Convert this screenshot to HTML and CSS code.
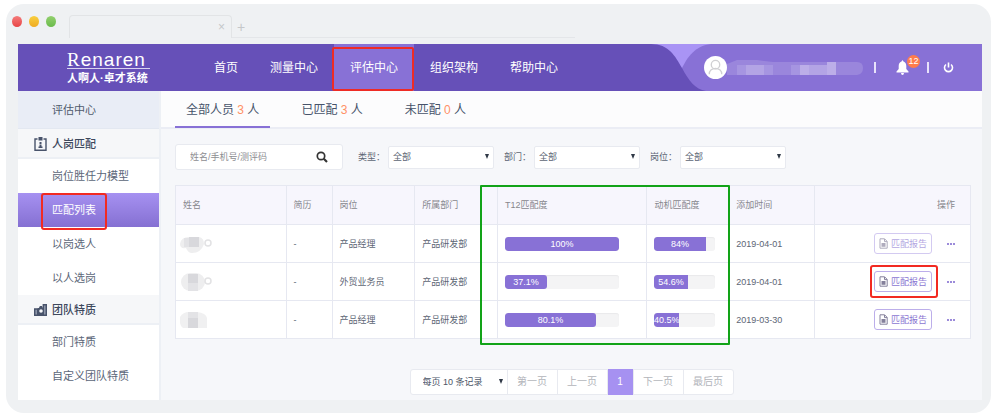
FILE: index.html
```html
<!DOCTYPE html>
<html lang="zh-CN">
<head>
<meta charset="utf-8">
<meta name="viewport" content="width=device-width, initial-scale=1">
<title>匹配列表</title>
<link rel="stylesheet" href="styles.css">
</head>
<body>
<svg class="sprite" aria-hidden="true">
  <symbol id="doc" viewBox="0 0 9 11"><path d="M1 .8h4.600L8.200 3.400v6.800H1z M5.500 1v2.600H8" fill="none" stroke="currentColor"/><path d="M2.500 5h4v3.800h-4z" fill="currentColor"/></symbol>
</svg>
<div class="browser">
  <div class="chrome">
    <span class="dot red"></span><span class="dot yellow"></span><span class="dot green"></span>
    <div class="chrome-tab">×</div>
    <span class="plus">+</span>
  </div>
  <div class="app">
    <header class="header">
      <svg class="swoosh" viewBox="0 0 331 47" preserveAspectRatio="xMaxYMid slice" aria-hidden="true">
        <path d="M0 0h80v47H0z" fill="#a994f5"/>
        <path d="M331 0H63C47 0 38 10 31 24V47h300z" fill="#8871d6"/>
        <path d="M0 0C18 0 24 12 31 24 38 37 44 45 55 47H0z" fill="#6650b8"/>
      </svg>
      <div class="logo"><span class="logo-name"><span class="logo-cap">R</span>enaren</span><span class="logo-sub">人啊人·卓才系统</span></div>
      <nav class="nav">
        <a href="#">首页</a><a href="#">测量中心</a><a href="#" class="current">评估中心</a><a href="#">组织架构</a><a href="#">帮助中心</a>
      </nav>
      <div class="user">
        <svg class="avatar" viewBox="0 0 24 24" aria-hidden="true"><circle cx="12" cy="12" r="12" fill="#fff"/><circle cx="12" cy="9" r="4.400" fill="none" stroke="#d0d0d3" stroke-width="1.400"/><path d="M5.500 19c0-3.500 2.500-6 6.500-6s6.500 2.500 6.500 6" fill="none" stroke="#d0d0d3" stroke-width="1.400"/></svg>
        <svg class="masked" viewBox="0 0 136 15" aria-hidden="true"><path d="M0 4 10 0h20l16 2h84q6 0 6 6t-6 7H0z" fill="#9a86dc"/><path d="M10 5h9v10h-9zM37 5h9v10h-9zM64 5h9v10h-9z" fill="#a695e1"/><path d="M19 5h18v10H19zM82 5h9v10h-9zM91 5h9v10h-9z" fill="#b3a4e5"/><path d="M73 5h9v10h-9zM100 2h9v13h-9z" fill="#bcaee8"/></svg>
        <span class="bar"></span>
        <button class="bell" aria-label="通知">
          <svg viewBox="0 0 12 15" aria-hidden="true"><path d="M6 0l1 1.500C9 2.200 9.800 4 9.800 6v3L12 11.500v1H0v-1L2.200 9V6C2.200 4 3 2.200 5 1.500zM4.500 13h3Q7.400 15 6 15t-1.500-2z" fill="#fff"/></svg>
          <span class="badge">12</span>
        </button>
        <span class="bar"></span>
        <button class="power" aria-label="退出"><svg viewBox="0 0 11 11" aria-hidden="true"><path d="M3 2.500a4 4 0 1 0 5 0M5.500.5v5" fill="none" stroke="#fff" stroke-width="1.600"/></svg></button>
      </div>
    </header>
    <div class="body">
      <aside class="sidebar">
        <h2 class="side-title">评估中心</h2>
        <h3 class="group"><svg viewBox="0 0 13 14" aria-hidden="true"><path d="M3.500 2H1v11.300h11V2H9.500" fill="none" stroke="#48536b" stroke-width="1.400"/><path d="M4.500 0h4v3.500h-4zM5.500 5h2v2h-2zM5.500 7.500h2v2h1V11h-4V9.500h1z" fill="#48536b"/></svg>人岗匹配</h3>
        <a href="#">岗位胜任力模型</a>
        <a href="#" class="active"><span class="mark">匹配列表</span></a>
        <a href="#">以岗选人</a>
        <a href="#">以人选岗</a>
        <h3 class="group"><svg viewBox="0 0 13 14" aria-hidden="true"><path d="M.7 6h3v6.300h-3zM9.300 1.700h3v10.600h-3z" fill="#8c95a8" stroke="#48536b" stroke-width="1.400"/><path d="M3.700 5h1.200l1-2h2l1 2h1v8h-6z" fill="#48536b"/><circle cx="7" cy="8" r="1.800" fill="#f6f7f9"/></svg>团队特质</h3>
        <a href="#">部门特质</a>
        <a href="#">自定义团队特质</a>
      </aside>
      <main class="main">
        <nav class="tabs">
          <a href="#" class="on">全部人员 <b>3</b> 人</a><a href="#">已匹配 <b>3</b> 人</a><a href="#">未匹配 <b>0</b> 人</a>
        </nav>
        <form class="filters">
          <div class="search">
            <input type="text" aria-label="搜索" placeholder="姓名/手机号/测评码">
            <button type="button" aria-label="搜索"><svg viewBox="0 0 12 12" aria-hidden="true"><circle cx="5" cy="5" r="3.700" fill="none" stroke="#333" stroke-width="1.700"/><path d="M7.800 7.800l3.200 3.200" stroke="#333" stroke-width="2.200"/></svg></button>
          </div>
          <label for="type">类型：</label><span class="pick"><select id="type"><option>全部</option></select></span>
          <label for="dept">部门：</label><span class="pick"><select id="dept"><option>全部</option></select></span>
          <label for="post">岗位：</label><span class="pick"><select id="post"><option>全部</option></select></span>
        </form>
        <div class="table-wrap">
          <table>
            <colgroup><col class="c-name"><col class="c-cv"><col class="c-post"><col class="c-dept"><col class="c-t12"><col class="c-drive"><col class="c-date"><col></colgroup>
            <thead><tr><th>姓名</th><th>简历</th><th>岗位</th><th>所属部门</th><th>T12匹配度</th><th>动机匹配度</th><th>添加时间</th><th class="ops">操作</th></tr></thead>
            <tbody>
              <tr>
                <td><svg class="blur" viewBox="0 0 36 18" aria-hidden="true"><path d="M0 9Q1 2 9 2h10q5 1 5 7-3 9-12 9-4 0-6-5-6 1-6-4z" fill="#eeeeef"/><path d="M9 2h10v10H9z" fill="#d8d8dc"/><path d="M4 3h5v9H4z" fill="#e3e3e6"/><circle cx="28" cy="8" r="3" fill="none" stroke="#e2e2e4" stroke-width="1.500"/></svg></td>
                <td>-</td><td>产品经理</td><td>产品研发部</td>
                <td><div class="meter"><span style="width:100%">100%</span></div></td>
                <td><div class="meter small"><span style="width:84%">84%</span></div></td>
                <td>2019-04-01</td>
                <td class="ops"><button class="report faded"><svg aria-hidden="true"><use href="#doc"/></svg>匹配报告</button><button class="more" aria-label="更多"></button></td>
              </tr>
              <tr>
                <td><svg class="blur" viewBox="0 0 36 18" aria-hidden="true"><rect x="1" width="24" height="18" rx="9" fill="#eeeeef"/><path d="M8 1h10v9H8z" fill="#d8d8dc"/><path d="M8 10h10v8H8z" fill="#e3e3e6"/><circle cx="28" cy="8" r="3" fill="none" stroke="#e2e2e4" stroke-width="1.500"/></svg></td>
                <td>-</td><td>外贸业务员</td><td>产品研发部</td>
                <td><div class="meter"><span style="width:37.1%">37.1%</span></div></td>
                <td><div class="meter small"><span style="width:54.6%">54.6%</span></div></td>
                <td>2019-04-01</td>
                <td class="ops"><button class="report mark"><svg aria-hidden="true"><use href="#doc"/></svg>匹配报告</button><button class="more" aria-label="更多"></button></td>
              </tr>
              <tr>
                <td><svg class="blur" viewBox="0 0 36 18" aria-hidden="true"><path d="M0 6Q3 1 9 1h8q9 1 10 6v10H3Q-1 15 0 6z" fill="#f0f0f1"/><path d="M8 1h10v6H8z" fill="#e3e3e6"/><path d="M8 7h10v10H8z" fill="#d8d8dc"/></svg></td>
                <td>-</td><td>产品经理</td><td>产品研发部</td>
                <td><div class="meter"><span style="width:80.1%">80.1%</span></div></td>
                <td><div class="meter small"><span style="width:40.5%">40.5%</span></div></td>
                <td>2019-03-30</td>
                <td class="ops"><button class="report"><svg aria-hidden="true"><use href="#doc"/></svg>匹配报告</button><button class="more" aria-label="更多"></button></td>
              </tr>
            </tbody>
          </table>
          <div class="focus"></div>
        </div>
        <nav class="pager" aria-label="分页">
          <span class="pick"><select aria-label="每页记录数"><option>每页 10 条记录</option></select></span><button>第一页</button><button>上一页</button><button class="page">1</button><button>下一页</button><button>最后页</button>
        </nav>
      </main>
    </div>
  </div>
</div>
</body>
</html>
```
FILE: styles.css
```css
* { box-sizing: border-box; }
body {
  margin: 0;
  background: #fff;
  color: #5d6675;
  font: 9px/16px "Liberation Sans", "Noto Sans CJK SC", sans-serif;
}
a { color: inherit; text-decoration: none; }
button, input, select { font: inherit; color: inherit; border: 0; margin: 0; padding: 0; background: none; }
h2, h3 { margin: 0; font-weight: normal; }
svg { display: block; flex: none; }
.sprite { display: none; }

.browser {
  margin: 4px 9px 6px 6px;
  padding: 0 9px 13px 12px;
  background: #eff1f3;
  border-radius: 18px;
}
.chrome { display: flex; align-items: flex-end; height: 34px; margin-bottom: 6px; }
.dot { width: 10px; height: 11px; margin: 0 7px 11px 0; border-radius: 50%; }
.dot:first-child { margin-left: -6px; }
.red { background: linear-gradient(#f47b7b, #e84545); }
.yellow { background: linear-gradient(#f8cf3f, #efab22); }
.green { background: linear-gradient(#93d06f, #6abb4b); }
.chrome-tab {
  width: 163px; height: 23px; margin-left: 6px; padding: 2px 6px;
  border: 1px solid #e2e4e6; border-bottom: 0; border-radius: 4px 4px 0 0;
  text-align: right; font-size: 12px; line-height: 18px; color: #c5c7ca;
}
.plus {
  flex: 0 1 343px; height: 23px; padding-left: 5px;
  border-bottom: 1px solid #e4e6e9; font-size: 14px; line-height: 24px; color: #c5c7ca;
}

.header { position: relative; display: flex; height: 47px; background: #6650b8; color: #fff; }
.swoosh { position: absolute; top: 0; right: 0; width: 331px; height: 47px; }
.logo { width: 180px; padding: 7px 0 0 49px; white-space: nowrap; }
.logo span { display: block; }
.logo .logo-name { width: 83px; height: 18px; border-bottom: 1px solid #d9d2ef; font: 19px/18px "Liberation Sans", sans-serif; letter-spacing: 1px; }
.logo .logo-cap { display: inline; font-family: "Liberation Serif", serif; }
.logo .logo-sub { margin-top: 1px; font-size: 11px; font-weight: bold; line-height: 16px; }
.nav { display: flex; font-size: 12px; line-height: 48px; }
.nav a { height: 47px; padding: 0 16px; white-space: nowrap; }
.nav .current { position: relative; background: #8871d6; }
.nav .current::after { content: ""; position: absolute; inset: 3px 0 0 -2px; border: 2px solid #ee2b25; border-radius: 2px; }
.user { position: relative; display: flex; align-items: center; margin-left: auto; padding-right: 28px; }
.avatar { width: 23px; height: 23px; }
.masked { width: 136px; height: 15px; }
.bar { width: 2px; height: 11px; margin: 0 0 0 11px; background: #e8e2fa; }
.bell { position: relative; width: 26px; height: 17px; margin-left: 20px; }
.bell svg { width: 13px; height: 15px; }
.badge {
  position: absolute; top: -4px; left: 11px; width: 13px; height: 13px; border-radius: 50%;
  background: #ff7c4d; line-height: 13px; text-align: center;
}
.bell + .bar { margin-left: 5px; }
.power { margin-left: 14px; }
.power svg { width: 11px; height: 11px; }

.body { display: flex; }
.sidebar { flex: 0 0 143px; padding-bottom: 7px; border-right: 2px solid #edf0f5; background: #fff; color: #5b6678; font-size: 11px; }
.side-title { height: 38px; padding-left: 34px; border-bottom: 1px solid #e3e8f1; background: #e9edf6; font-size: 11px; line-height: 38px; color: #505b6d; }
.group {
  display: flex; align-items: center; gap: 5px; height: 30px; padding: 2px 0 0 16px;
  border-bottom: 2px solid #edf0f5; background: #f6f7f9; font-size: 11px; font-weight: 500; color: #3d485d;
}
.group svg { width: 13px; height: 14px; }
.sidebar a { display: block; height: 34px; padding-left: 34px; line-height: 34px; }
.sidebar .active { background: linear-gradient(#a691f1, #8570d2); color: #fff; }
.mark { position: relative; }
.mark::after { content: ""; position: absolute; border: 2px solid #f22a22; border-radius: 3px; }
.sidebar .mark::after { inset: -11px -11px -14px -11px; }

.main { flex: 1; min-width: 0; background: #f6f7fa; }
.tabs { display: flex; height: 38px; padding-left: 14px; border-bottom: 2px solid #ebedf5; background: #fcfcfd; font-size: 12px; line-height: 38px; color: #46536a; }
.tabs a { height: 37px; padding: 0 11px; margin-right: 20px; white-space: nowrap; }
.tabs .on { border-bottom: 2px solid #8871d6; }
.tabs b { font-weight: normal; color: #ff9166; }

.filters { display: flex; align-items: center; padding: 15px 14px 0; }
.search { display: flex; align-items: center; width: 168px; height: 26px; margin-right: 15px; border: 1px solid #e8eaf0; border-radius: 3px; background: #fff; }
.search input { flex: 1; min-width: 0; height: 24px; padding-left: 14px; }
.search input::placeholder { color: #8d8d91; opacity: 1; }
.search button { padding-right: 14px; }
.search svg { width: 12px; height: 12px; }
.filters label { width: 30px; white-space: nowrap; }
.pick { position: relative; }
.pick select { width: 100%; height: 100%; padding-left: 4px; appearance: none; }
.pick::after { content: ""; position: absolute; top: 50%; right: 4px; margin-top: -3px; border: solid transparent; border-width: 5px 2px 0; border-top-color: #303947; pointer-events: none; }
.filters .pick { width: 106px; height: 23px; margin-right: 10px; border: 1px solid #e8eaf0; border-radius: 2px; background: #fff; }

.table-wrap { position: relative; margin: 15px 11px 0 14px; }
table { width: 100%; table-layout: fixed; border-collapse: collapse; background: #fff; }
th, td { height: 38px; padding: 0 7px; border: 1px solid #e6e8f1; text-align: left; font-weight: normal; white-space: nowrap; }
th { height: 39px; background: #f7f6fd; color: #87878d; }
.c-name { width: 13.9%; }
.c-cv { width: 5.8%; }
.c-post, .c-dept { width: 10.4%; }
.c-t12 { width: 18.8%; }
.c-drive { width: 10.3%; }
.c-date { width: 10.8%; }
th.ops { padding-right: 15px; text-align: right; }
td.ops { padding-right: 14px; text-align: right; }
.blur { width: 36px; height: 18px; margin-left: -3px; }
.meter { width: 114px; height: 14px; overflow: hidden; border-radius: 3px; background: #f4f4f5; box-shadow: inset 0 1px 1px #e9e9eb; }
.meter.small { width: 61px; }
.meter span { display: flex; justify-content: center; height: 14px; border-radius: 3px; background: #8871d6; color: #fff; line-height: 14px; }
.meter.small span { border-radius: 3px 0 0 3px; }
.report { display: inline-flex; align-items: center; gap: 3px; height: 21px; padding: 0 4px; border: 1px solid #bcaeea; border-radius: 3px; background: #fff; color: #8b76d2; vertical-align: middle; }
.report svg { width: 9px; height: 11px; color: #85819b; }
.faded { opacity: .65; }
.report.mark::after { inset: -7px -7px -7px -5px; }
.more { width: 9px; height: 2px; margin-left: 15px; vertical-align: middle; background: repeating-linear-gradient(90deg, #9c8bda 0 2px, #fff 2px 3px); }
.focus { position: absolute; inset: 0 30.3% -6px 38.3%; border: 2px solid #12a318; border-radius: 1px; pointer-events: none; }

.pager { display: flex; width: fit-content; height: 26px; margin: 30px auto 4px; border: 1px solid #e8eaf0; border-radius: 3px; background: #fff; color: #b2b4ba; font-size: 10px; }
.pager .pick { width: 96px; color: #4b5567; font-size: 9px; }
.pager select { padding-left: 12px; }
.pager button { width: 50px; border-left: 1px solid #e8eaf0; }
.pager .page { width: 26px; margin: -1px 0; background: #a691f1; color: #fff; }
```
